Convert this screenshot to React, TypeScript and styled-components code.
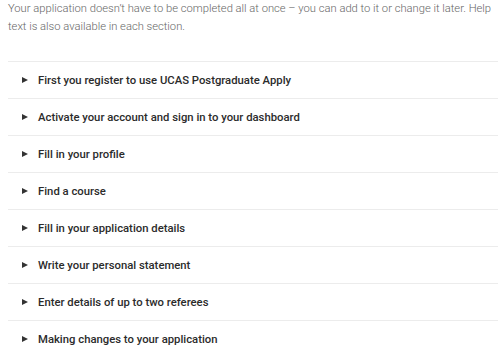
import React from "react";
import styled, { createGlobalStyle } from "styled-components";

const Global = createGlobalStyle`
  html, body { margin: 0; padding: 0; background: #fff; }
  body { font-family: Roboto, "Liberation Sans", Arial, sans-serif; }
`;

const Page = styled.div`
  padding: 0 1px 0 8px;
`;

const Intro = styled.p`
  margin: 0 0 25px 0;
  font-size: 11.2px;
  line-height: 18px;
  font-weight: 300;
  color: #666;
  width: 488px;
`;

const List = styled.div`
  display: flex;
  flex-direction: column;
`;

const Row = styled.div`
  display: flex;
  align-items: center;
  height: 36px;
  border-top: 1px solid #ececec;
  padding-left: 14px;
  gap: 10px;
`;

const Arrow = styled.span`
  width: 0;
  height: 0;
  border-top: 3.5px solid transparent;
  border-bottom: 3.5px solid transparent;
  border-left: 6px solid #333;
`;

const Title = styled.span`
  font-size: 11.3px;
  font-weight: 500;
  color: #2b2b2b;
`;

const items = [
  "First you register to use UCAS Postgraduate Apply",
  "Activate your account and sign in to your dashboard",
  "Fill in your profile",
  "Find a course",
  "Fill in your application details",
  "Write your personal statement",
  "Enter details of up to two referees",
  "Making changes to your application",
];

export default function App() {
  return (
    <Page>
      <Global />
      <Intro>
        Your application doesn’t have to be completed all at once – you can add to it or change it later. Help text is also available in each section.
      </Intro>
      <List>
        {items.map((t) => (
          <Row key={t}>
            <Arrow />
            <Title>{t}</Title>
          </Row>
        ))}
      </List>
    </Page>
  );
}
